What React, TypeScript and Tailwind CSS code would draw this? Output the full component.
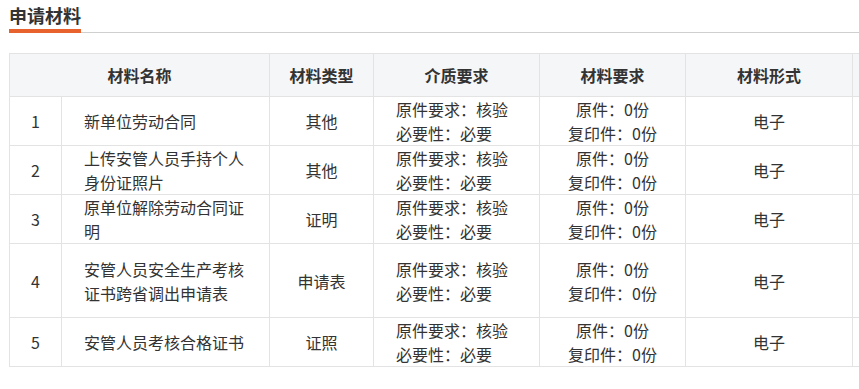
import React from "react";

const rows = [
  { no: 1, name: "新单位劳动合同", type: "其他" },
  { no: 2, name: "上传安管人员手持个人身份证照片", type: "其他" },
  { no: 3, name: "原单位解除劳动合同证明", type: "证明" },
  { no: 4, name: "安管人员安全生产考核证书跨省调出申请表", type: "申请表", tall: true },
  { no: 5, name: "安管人员考核合格证书", type: "证照" },
];

const cell = "border border-[#e3e3e3] p-0 align-middle";

export default function App() {
  return (
    <div
      className="w-[859px] h-[389px] overflow-hidden bg-white text-[#333]"
      style={{ fontFamily: '"Microsoft YaHei", "Noto Sans CJK SC", "Noto Sans", sans-serif' }}
    >
      <div className="ml-[9px] flex border-b border-[#cfcfcf]">
        <h2 className="pt-[2px] text-[18px] leading-[27px] font-bold text-[#333] border-b-4 border-[#e8622d] mb-[-1px]">
          申请材料
        </h2>
      </div>

      <div className="mt-[20px] pl-[9px]">
        <table className="table-fixed border-collapse w-[993px] text-[16px]">
          <colgroup>
            <col className="w-[52px]" />
            <col className="w-[208px]" />
            <col className="w-[104px]" />
            <col className="w-[166px]" />
            <col className="w-[146px]" />
            <col className="w-[167px]" />
            <col className="w-[150px]" />
          </colgroup>
          <thead>
            <tr className="bg-[#f5f6f8] h-[43px]">
              <th colSpan={2} className={`${cell} font-bold text-center`}>材料名称</th>
              <th className={`${cell} font-bold text-center`}>材料类型</th>
              <th className={`${cell} font-bold text-center`}>介质要求</th>
              <th className={`${cell} font-bold text-center`}>材料要求</th>
              <th className={`${cell} font-bold text-center`}>材料形式</th>
              <th className={cell}></th>
            </tr>
          </thead>
          <tbody className="leading-[24px]">
            {rows.map((r) => (
              <tr key={r.no} className={r.tall ? "h-[74px]" : "h-[49px]"}>
                <td className={`${cell} text-center`}>{r.no}</td>
                <td className={`${cell} pl-[22px] pr-[22px] text-left`}>{r.name}</td>
                <td className={`${cell} text-center`}>{r.type}</td>
                <td className={`${cell} pl-[22px] text-left`}>
                  <div>原件要求：核验</div>
                  <div>必要性：必要</div>
                </td>
                <td className={`${cell} text-center`}>
                  <div>原件：0份</div>
                  <div>复印件：0份</div>
                </td>
                <td className={`${cell} text-center`}>电子</td>
                <td className={cell}></td>
              </tr>
            ))}
          </tbody>
        </table>
      </div>
    </div>
  );
}
